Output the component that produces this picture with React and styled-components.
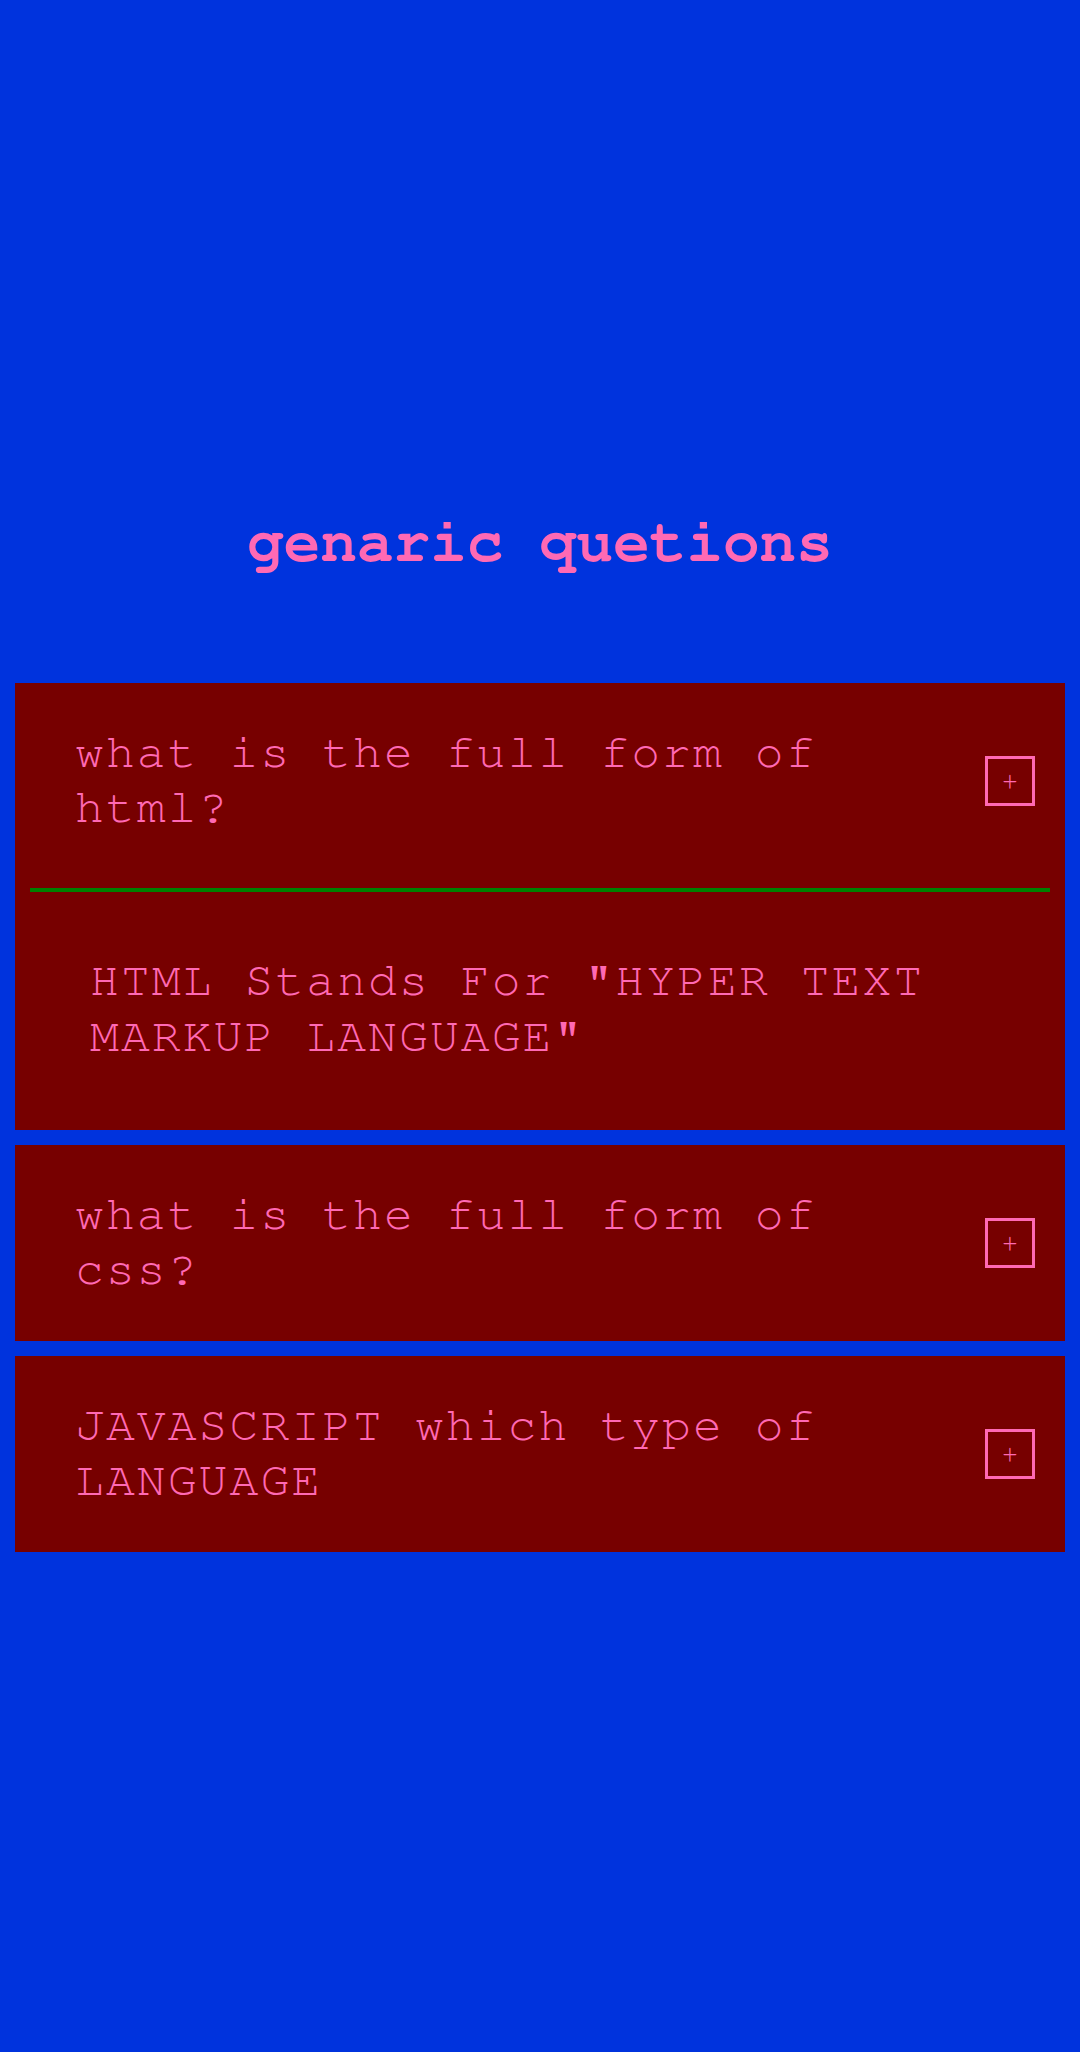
import React, { useState } from 'react'
import styled, { createGlobalStyle } from 'styled-components'

const GlobalStyle = createGlobalStyle`
  *{
    box-sizing:border-box;
  }
  body{
    margin:0;
    background-color:#0033dd;
    font-family:"Nimbus Mono PS", "Nimbus Mono L", "FreeMono", Courier, "Courier New", monospace;
  }
`

const questions = [
  {
    id: 1,
    title: 'what is the full form of html?',
    info: 'HTML Stands For "HYPER TEXT MARKUP LANGUAGE"',
  },
  {
    id: 2,
    title: 'what is the full form of css?',
    info: 'CSS Stands For "CASCADING STYLE SHEETS"',
  },
  {
    id: 3,
    title: 'JAVASCRIPT which type of LANGUAGE',
    info: 'JAVASCRIPT is a SCRIPTING LANGUAGE',
  },
]

function Question({ title, info, open, onToggle }) {
  return (
    <Card>
      <Header>
        <h4>{title}</h4>
        <ToggleBtn onClick={onToggle}>+</ToggleBtn>
      </Header>
      {open && (
        <Answer>
          <p>{info}</p>
        </Answer>
      )}
    </Card>
  )
}

export default function App() {
  const [openId, setOpenId] = useState(1)

  return (
    <>
      <GlobalStyle />
      <Container>
        <Title>genaric quetions</Title>
        <List>
          {questions.map((q) => (
            <Question
              key={q.id}
              {...q}
              open={openId === q.id}
              onToggle={() => setOpenId(openId === q.id ? null : q.id)}
            />
          ))}
        </List>
      </Container>
    </>
  )
}

const Container = styled.main`
  min-height:100vh;
  display:flex;
  flex-direction:column;
  justify-content:center;
`

const Title = styled.h1`
  margin:8px 0 106px;
  text-align:center;
  color:hotpink;
  font-size:61px;
  font-weight:700;
  line-height:69px;
`

const List = styled.section`
  display:flex;
  flex-direction:column;
  gap:15px;
  padding:0 15px;
`

const Card = styled.article`
  background-color:#770000;
  color:hotpink;
`

const Header = styled.div`
  display:flex;
  align-items:center;
  justify-content:space-between;
  padding:43px 30px 43px 60px;
  h4{
    margin:0;
    flex:1;
    padding-right:60px;
    font-size:48px;
    font-weight:400;
    line-height:55px;
    letter-spacing:2.1px;
  }
`

const ToggleBtn = styled.button`
  flex-shrink:0;
  width:50px;
  height:50px;
  padding:0;
  display:flex;
  align-items:center;
  justify-content:center;
  background:transparent;
  border:3px solid hotpink;
  color:hotpink;
  font-family:inherit;
  font-size:28px;
  cursor:pointer;
`

const Answer = styled.div`
  margin:9px 15px 0;
  border-top:4px solid green;
  padding:61px 60px 65px;
  p{
    margin:0;
    font-size:48px;
    line-height:56px;
    letter-spacing:2.1px;
  }
`
